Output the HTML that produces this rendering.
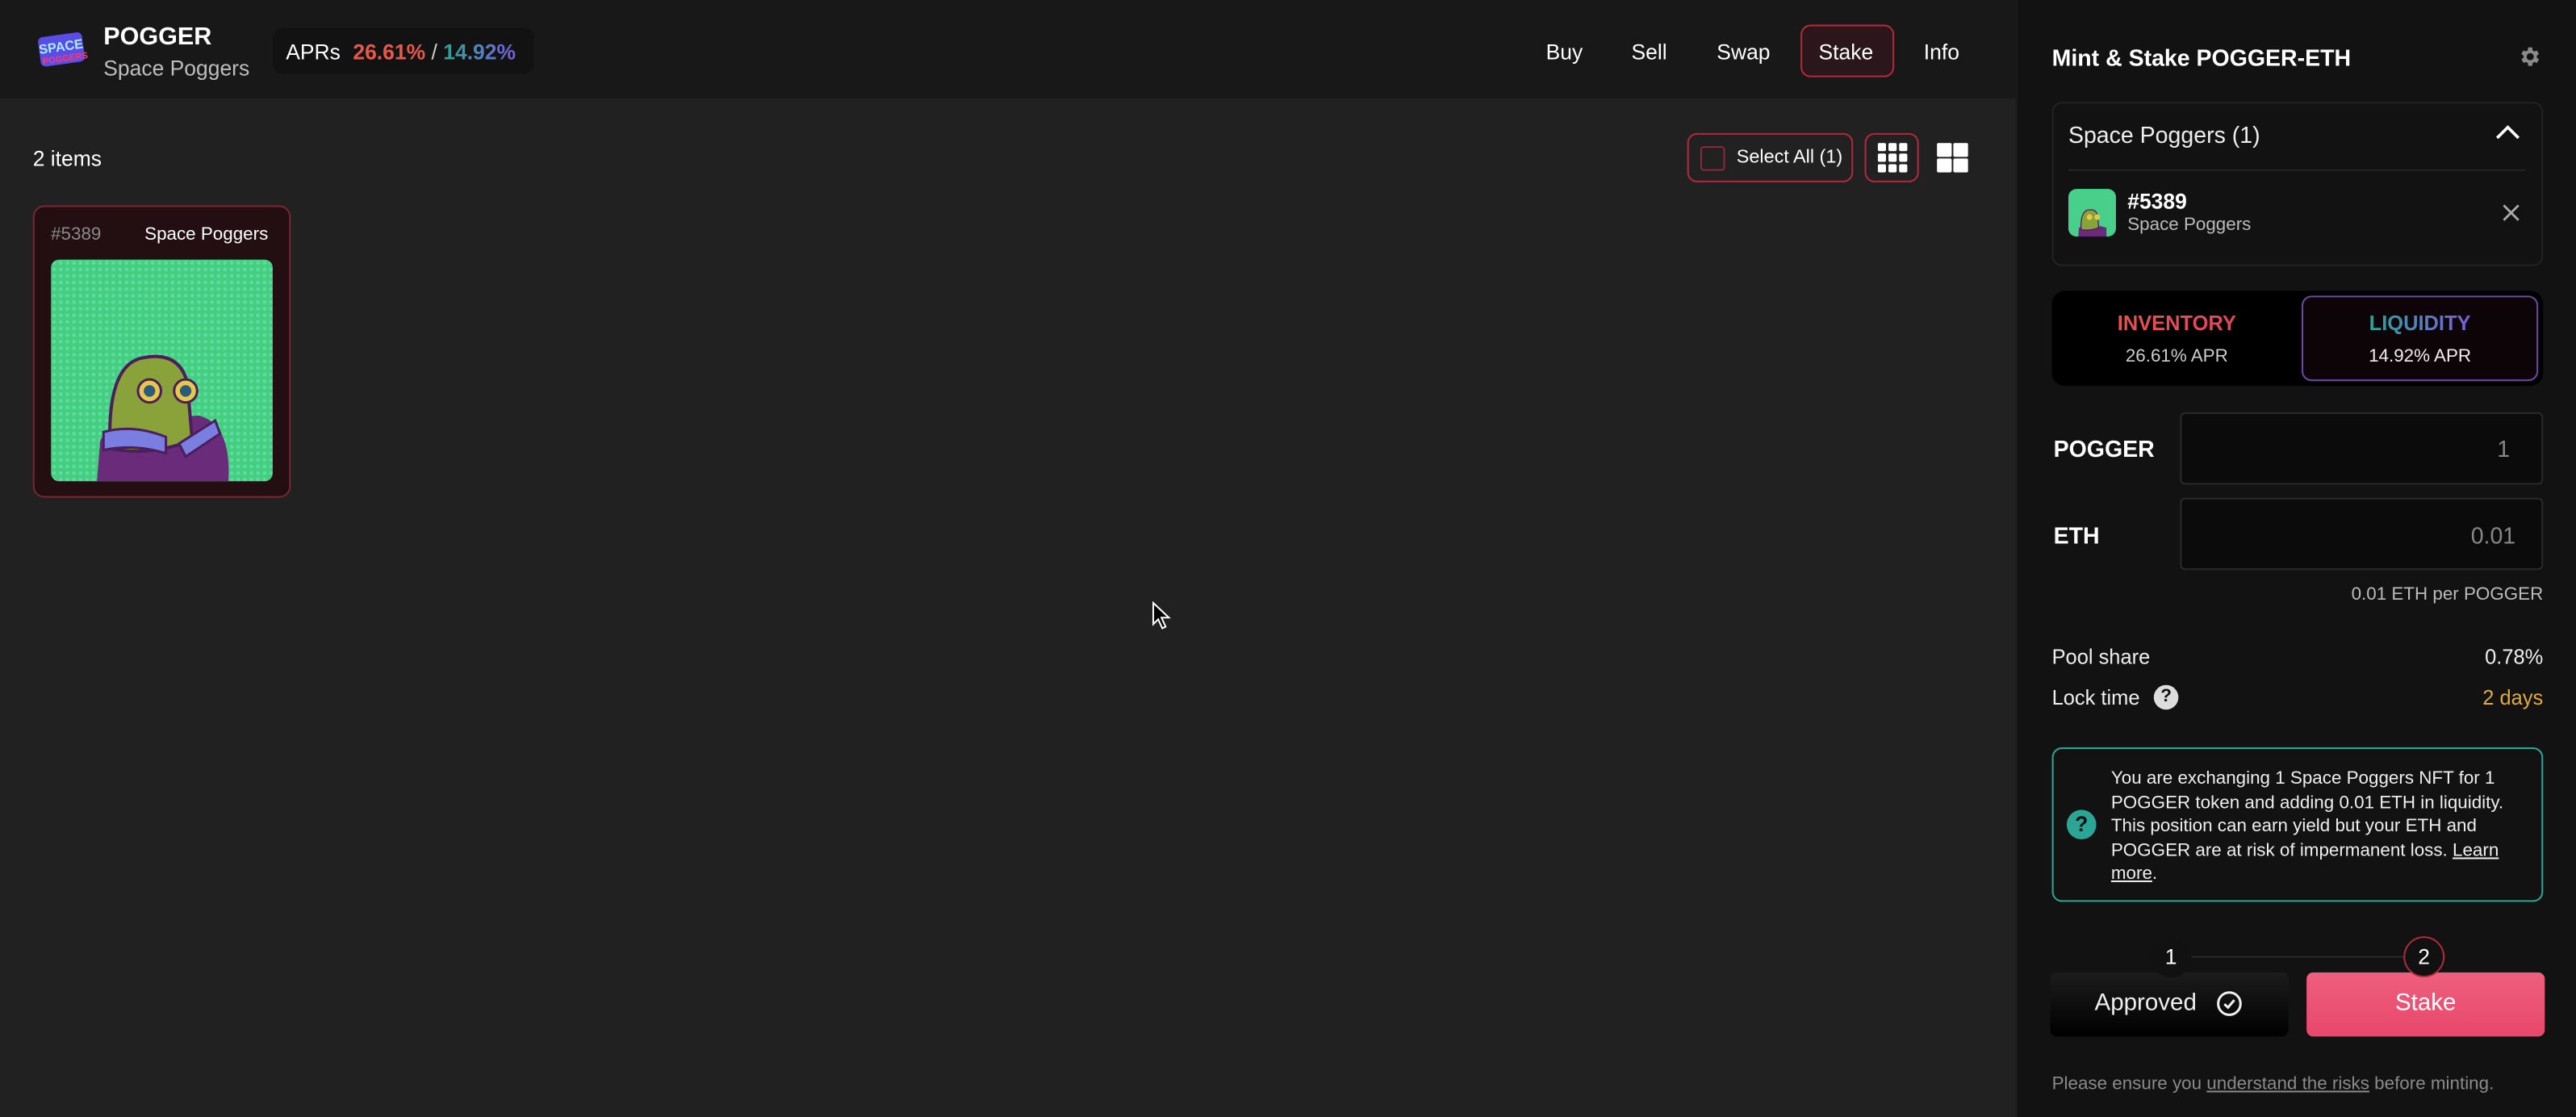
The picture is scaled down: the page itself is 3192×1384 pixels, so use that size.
<!DOCTYPE html>
<html><head><meta charset="utf-8">
<style>
*{margin:0;padding:0;box-sizing:border-box}
html,body{width:3192px;height:1384px;overflow:hidden;background:#212121}
#s{width:1568px;height:680px;transform:scale(2.0357,2.0353);transform-origin:0 0;position:relative;font-family:"Liberation Sans",sans-serif;color:#fff;background:#212121}
.a{position:absolute;white-space:nowrap}
.hdr{left:0;top:0;width:1227px;height:60px;background:#181818}
.rp{left:1227px;top:0;width:341px;height:680px;background:#121212;border-left:1px solid #1c1c1c}
.nav{font-size:13px;top:24px}
.btnb{border:1px solid #b3283f;border-radius:6px}
.r{text-align:right}
</style></head><body><div id="s">
<div class="a hdr"></div>
<!-- logo -->
<svg class="a" style="left:22px;top:17px" width="32" height="28" viewBox="0 0 32 28">
<g transform="rotate(-8 16 14)"><rect x="2" y="4" width="27" height="18" rx="3" fill="#5a4ce8"/><text x="15.5" y="14" font-size="8" font-weight="bold" text-anchor="middle" fill="#a8f0ff" font-family="Liberation Sans">SPACE</text><text x="17" y="20.5" font-size="5.5" font-weight="bold" text-anchor="middle" fill="#ff3a6a" font-family="Liberation Sans">POGGERS</text></g></svg>
<div class="a" style="left:63px;top:14px;font-size:15px;font-weight:bold">POGGER</div>
<div class="a" style="left:63px;top:34px;font-size:13px;color:#bdbdbd">Space Poggers</div>
<div class="a" style="left:166px;top:17px;width:159px;height:28px;background:#121212;border-radius:6px"></div>
<div class="a" style="left:174px;top:24px;font-size:13px">APRs <b style="color:#e8584a;margin-left:4px">26.61%</b> <span style="color:#ccc">/</span> <b style="background:linear-gradient(90deg,#2aa596,#7b5ce0);-webkit-background-clip:text;color:transparent">14.92%</b></div>
<div class="a nav" style="left:941px">Buy</div>
<div class="a nav" style="left:993px">Sell</div>
<div class="a nav" style="left:1045px">Swap</div>
<div class="a btnb" style="left:1096px;top:15px;width:57px;height:32px;background:#2a161b"></div>
<div class="a nav" style="left:1107px">Stake</div>
<div class="a nav" style="left:1171px">Info</div>

<div class="a" style="left:20px;top:89px;font-size:13px">2 items</div>
<div class="a btnb" style="left:1027px;top:81px;width:101px;height:30px"></div>
<div class="a" style="left:1035px;top:89px;width:15px;height:15px;border:1px solid #8a2a3a;border-radius:2px"></div>
<div class="a" style="left:1057px;top:90px;font-size:11.5px">Select All (1)</div>
<div class="a btnb" style="left:1135px;top:81px;width:33px;height:30px"></div>
<svg class="a" style="left:1143px;top:87px" width="18" height="18" viewBox="0 0 18 18" fill="#fff"><rect x="0" y="0" width="5" height="5" rx="1"/><rect x="6.5" y="0" width="5" height="5" rx="1"/><rect x="13" y="0" width="5" height="5" rx="1"/><rect x="0" y="6.5" width="5" height="5" rx="1"/><rect x="6.5" y="6.5" width="5" height="5" rx="1"/><rect x="13" y="6.5" width="5" height="5" rx="1"/><rect x="0" y="13" width="5" height="5" rx="1"/><rect x="6.5" y="13" width="5" height="5" rx="1"/><rect x="13" y="13" width="5" height="5" rx="1"/></svg>
<svg class="a" style="left:1179px;top:87px" width="19" height="18" viewBox="0 0 19 18" fill="#fff"><rect x="0" y="0" width="9" height="8.5" rx="1"/><rect x="10" y="0" width="9" height="8.5" rx="1"/><rect x="0" y="9.5" width="9" height="8.5" rx="1"/><rect x="10" y="9.5" width="9" height="8.5" rx="1"/></svg>

<!-- card -->
<div class="a" style="left:20px;top:125px;width:157px;height:178px;background:#230e12;border:1px solid #7a2535;border-radius:7px"></div>
<div class="a" style="left:31px;top:137px;font-size:11px;color:#8a8a8a">#5389</div>
<div class="a" style="left:88px;top:137px;font-size:11px">Space Poggers</div>
<svg class="a" style="left:31px;top:158px;border-radius:5px" width="135" height="135" viewBox="0 0 135 135">
<defs><pattern id="d" width="4" height="4" patternUnits="userSpaceOnUse"><rect width="4" height="4" fill="#44cf7c"/><circle cx="2" cy="2" r="1.2" fill="#5fd9a8"/></pattern></defs>
<rect width="135" height="135" fill="url(#d)"/>
<path d="M28 135 L30 110 Q40 95 60 97 L90 95 Q110 100 108 135Z" fill="#6a2c7a"/>
<path d="M36 115 Q34 65 55 60 Q78 55 83 75 L86 110 Q60 120 36 115Z" fill="#8aa23a" stroke="#4a1f5c" stroke-width="2"/>
<circle cx="60" cy="80" r="7" fill="#e8c84a" stroke="#4a1f5c" stroke-width="1.5"/><circle cx="60" cy="80" r="3.5" fill="#2c5a7a"/>
<circle cx="82" cy="80" r="7" fill="#e8c84a" stroke="#4a1f5c" stroke-width="1.5"/><circle cx="82" cy="80" r="3.5" fill="#2c5a7a"/>
<path d="M32 105 Q50 100 70 108 L70 118 Q50 112 32 116Z" fill="#7a7ee0" stroke="#4a1f5c" stroke-width="1.5"/>
<path d="M78 112 L100 98 L103 106 L82 120Z" fill="#7a7ee0" stroke="#4a1f5c" stroke-width="1.5"/>
</svg>
<!-- cursor -->
<svg class="a" style="left:701px;top:366px" width="12" height="18" viewBox="0 0 12 18"><path d="M1 1 L1 14 L4 11 L6.5 16.5 L8.5 15.5 L6 10 L10.5 10Z" fill="#000" stroke="#fff" stroke-width="1"/></svg>

<!-- right panel -->
<div class="a rp"></div>
<div class="a" style="left:1249px;top:27px;font-size:14px;font-weight:bold">Mint &amp; Stake POGGER-ETH</div>
<svg class="a" style="left:1532px;top:27px" width="15" height="15" viewBox="0 0 24 24"><path fill="#8a8a8a" d="M19.4 13a7.5 7.5 0 000-2l2.1-1.6-2-3.5-2.5 1a7.6 7.6 0 00-1.7-1L15 3h-4l-.4 2.9a7.6 7.6 0 00-1.7 1l-2.5-1-2 3.5L6.6 11a7.5 7.5 0 000 2l-2.1 1.6 2 3.5 2.5-1a7.6 7.6 0 001.7 1L11 21h4l.4-2.9a7.6 7.6 0 001.7-1l2.5 1 2-3.5zM13 15.5a3.5 3.5 0 110-7 3.5 3.5 0 010 7z"/></svg>
<div class="a" style="left:1249px;top:62px;width:299px;height:100px;border:1px solid #222;border-radius:6px"></div>
<div class="a" style="left:1259px;top:74px;font-size:14px;color:#eee">Space Poggers (1)</div>
<svg class="a" style="left:1519px;top:76px" width="15" height="9" viewBox="0 0 15 9"><path d="M1 8 L7.5 1.5 L14 8" stroke="#fff" stroke-width="1.8" fill="none"/></svg>
<div class="a" style="left:1259px;top:103px;width:278px;height:1px;background:#252525"></div>
<svg class="a" style="left:1259px;top:115px;border-radius:5px" width="29" height="29" viewBox="0 0 135 135"><rect width="135" height="135" fill="#48d08a"/><path d="M28 135 L30 110 Q60 95 108 110 L108 135Z" fill="#6a2c7a"/><path d="M36 115 Q34 65 55 60 Q78 55 83 75 L86 110 Q60 120 36 115Z" fill="#8aa23a" stroke="#4a1f5c" stroke-width="3"/><circle cx="60" cy="80" r="8" fill="#e8c84a"/><circle cx="82" cy="80" r="8" fill="#e8c84a"/></svg>
<div class="a" style="left:1295px;top:115px;font-size:13px;font-weight:bold">#5389</div>
<div class="a" style="left:1295px;top:131px;font-size:11px;color:#bbb">Space Poggers</div>
<svg class="a" style="left:1523px;top:124px" width="11" height="11" viewBox="0 0 11 11"><path d="M1 1L10 10M10 1L1 10" stroke="#aaa" stroke-width="1.4"/></svg>

<div class="a" style="left:1249px;top:177px;width:299px;height:58px;background:#000;border-radius:8px"></div>
<div class="a" style="left:1401px;top:180px;width:144px;height:52px;background:#0d0407;border:1px solid #6a4aa0;border-radius:6px"></div>
<div class="a" style="left:1249px;top:190px;width:152px;text-align:center;font-size:12.5px;font-weight:bold;background:linear-gradient(90deg,#e8584a,#e04060);-webkit-background-clip:text;color:transparent">INVENTORY</div>
<div class="a" style="left:1249px;top:211px;width:152px;text-align:center;font-size:11px;color:#ccc">26.61% APR</div>
<div class="a" style="left:1401px;top:190px;width:144px;text-align:center;font-size:12.5px;font-weight:bold"><span style="background:linear-gradient(90deg,#2aa596,#7b5ce0);-webkit-background-clip:text;color:transparent">LIQUIDITY</span></div>
<div class="a" style="left:1401px;top:211px;width:144px;text-align:center;font-size:11px;color:#eee">14.92% APR</div>

<div class="a" style="left:1250px;top:265px;font-size:14px;font-weight:bold">POGGER</div>
<div class="a" style="left:1327px;top:251px;width:221px;height:44px;background:#0b0b0b;border:1px solid #2a2a2a;border-radius:3px"></div>
<div class="a" style="left:1520px;top:265px;font-size:14px;color:#888">1</div>
<div class="a" style="left:1250px;top:318px;font-size:14px;font-weight:bold">ETH</div>
<div class="a" style="left:1327px;top:303px;width:221px;height:44px;background:#0b0b0b;border:1px solid #2a2a2a;border-radius:3px"></div>
<div class="a" style="left:1504px;top:318px;font-size:14px;color:#888">0.01</div>
<div class="a r" style="left:1348px;width:200px;top:356px;font-size:11px;color:#bbb">0.01 ETH per POGGER</div>
<div class="a" style="left:1249px;top:393px;font-size:12.5px;color:#eee">Pool share</div>
<div class="a r" style="left:1448px;width:100px;top:393px;font-size:12.5px;color:#eee">0.78%</div>
<div class="a" style="left:1249px;top:418px;font-size:12.5px;color:#eee">Lock time</div>
<div class="a" style="left:1311px;top:417px;width:15px;height:15px;border-radius:50%;background:#ddd;color:#111;font-size:11px;font-weight:bold;text-align:center;line-height:15px">?</div>
<div class="a r" style="left:1448px;width:100px;top:418px;font-size:12.5px;color:#e0a93a">2 days</div>

<div class="a" style="left:1249px;top:455px;width:299px;height:94px;border:1px solid #2aa596;border-radius:6px"></div>
<div class="a" style="left:1258px;top:493px;width:18px;height:18px;border-radius:50%;background:#2aa596;color:#111;font-size:13px;font-weight:bold;text-align:center;line-height:18px">?</div>
<div class="a" style="left:1285px;top:467px;width:255px;white-space:normal;font-size:11px;line-height:14.5px;color:#eee">You are exchanging 1 Space Poggers NFT for 1 POGGER token and adding 0.01 ETH in liquidity. This position can earn yield but your ETH and POGGER are at risk of impermanent loss. <u>Learn more</u>.</div>

<div class="a" style="left:1321px;top:582px;width:154px;height:1px;background:#2a2a2a"></div>
<div class="a" style="left:1248px;top:592px;width:145px;height:39px;border-radius:4px;background:linear-gradient(#1c1c1c,#000)"></div>
<div class="a" style="left:1404px;top:592px;width:145px;height:39px;border-radius:4px;background:linear-gradient(#ee5f7e,#e8476a)"></div>
<div class="a" style="left:1309px;top:570px;width:25px;height:25px;border-radius:50%;background:#111;text-align:center;line-height:25px;font-size:13px">1</div>
<div class="a" style="left:1463px;top:570px;width:25px;height:25px;border-radius:50%;background:#111;border:1px solid #b3283f;text-align:center;line-height:23px;font-size:13px">2</div>
<div class="a" style="left:1275px;top:603px;font-size:14.5px;color:#eee">Approved</div>
<svg class="a" style="left:1349px;top:603px" width="16" height="16" viewBox="0 0 16 16"><circle cx="8" cy="8" r="6.8" stroke="#eee" stroke-width="1.5" fill="none"/><path d="M5 8.3L7.2 10.3L11 5.8" stroke="#eee" stroke-width="1.5" fill="none"/></svg>
<div class="a" style="left:1404px;width:145px;text-align:center;top:603px;font-size:14.5px;color:#fff">Stake</div>
<div class="a" style="left:1249px;top:654px;font-size:11px;color:#8a8a8a">Please ensure you <u>understand the risks</u> before minting.</div>
</div></body></html>
